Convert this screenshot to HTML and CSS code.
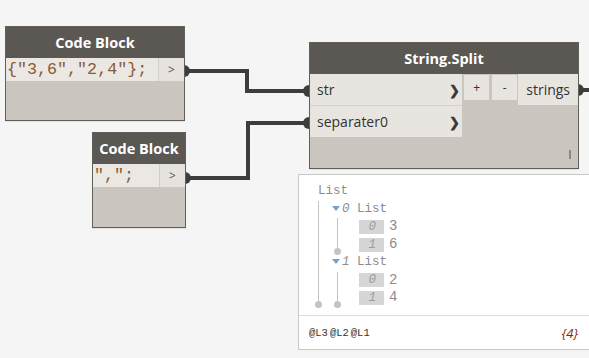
FILE: index.html
```html
<!DOCTYPE html>
<html lang="en">
<head>
    <meta charset="UTF-8">
    <title>String.Split graph</title>
    <link rel="stylesheet" href="styles.css">
</head>
<body>
    <div class="canvas">
        <svg class="wires" width="589" height="358" viewBox="0 0 589 358">
            <path class="wire" d="M188 71 H247 V91 H306"/>
            <path class="wire" d="M188 178 H248 V123 H306"/>
            <path class="wire" d="M582 90 H592"/>
            <path class="port" d="M184 65 A6 6 0 0 1 184 77 Z"/>
            <path class="port" d="M185 172 A6 6 0 0 1 185 184 Z"/>
            <path class="port" d="M309 85 A6 6 0 0 0 309 97 Z"/>
            <path class="port" d="M309 117 A6 6 0 0 0 309 129 Z"/>
            <path class="port" d="M578 84 A6 6 0 0 1 578 96 Z"/>
        </svg>

        <div class="node code-block first">
            <div class="node-title">Code Block</div>
            <div class="code-row">
                <span class="code">{"3,6","2,4"};</span>
                <span class="out-cell">&gt;</span>
            </div>
        </div>

        <div class="node code-block second">
            <div class="node-title">Code Block</div>
            <div class="code-row">
                <span class="code">",";</span>
                <span class="out-cell">&gt;</span>
            </div>
        </div>

        <div class="node split">
            <div class="node-title">String.Split</div>
            <div class="split-body">
                <div class="inputs">
                    <div class="input-row first-row">str<span class="chev">&#x276F;</span></div>
                    <div class="input-row">separater0<span class="chev">&#x276F;</span></div>
                </div>
                <div class="lacing">
                    <span class="lace-btn">+</span>
                    <span class="lace-btn">-</span>
                </div>
                <div class="output-cell">strings</div>
            </div>
            <span class="grip"></span>
        </div>

        <div class="watch">
            <div class="tree">
                <div class="item">
                    <div class="label">List</div>
                    <div class="children root-children">
                        <div class="item">
                            <div class="label"><span class="caret"></span><i>0</i> List</div>
                            <div class="children">
                                <div class="leaf"><span class="idx">0</span>3</div>
                                <div class="leaf"><span class="idx">1</span>6</div>
                            </div>
                        </div>
                        <div class="item">
                            <div class="label"><span class="caret"></span><i>1</i> List</div>
                            <div class="children">
                                <div class="leaf"><span class="idx">0</span>2</div>
                                <div class="leaf"><span class="idx">1</span>4</div>
                            </div>
                        </div>
                    </div>
                </div>
            </div>
            <div class="watch-footer">
                <div class="levels"><span>@L3</span><span>@L2</span><span>@L1</span></div>
                <span class="count">{4}</span>
            </div>
        </div>
    </div>
</body>
</html>
```

FILE: styles.css
```css
:root {
    --canvas: #f5f5f5;
    --title: #5b5854;
    --body: #cac6bf;
    --row: #e8e5e0;
    --wire: #3d3d3d;
}

* {
    box-sizing: border-box;
    margin: 0;
    padding: 0;
}

body {
    background: var(--canvas);
    font-family: 'Open Sans', sans-serif;
}

.canvas {
    position: relative;
    width: 589px;
    height: 358px;
    overflow: hidden;
}

.wires {
    position: absolute;
    left: 0;
    top: 0;
}

.wire {
    fill: none;
    stroke: var(--wire);
    stroke-width: 4;
    stroke-linejoin: miter;
}

.port {
    fill: var(--wire);
}

/* nodes sit on a free canvas */
.node {
    position: absolute;
    display: flex;
    flex-direction: column;
    background: var(--body);
    border: 1px solid #625f5b;
    box-shadow: 0 1px 0 #e2e2e2;
}

.node-title {
    height: 31px;
    background: var(--title);
    color: #fff;
    font-weight: 700;
    font-size: 14.5px;
    display: flex;
    align-items: center;
    justify-content: center;
}

.code-block.first {
    left: 5px;
    top: 26px;
    width: 180px;
    height: 95px;
}

.code-block.second {
    left: 92px;
    top: 132px;
    width: 94px;
    height: 96px;
}

.code-row {
    display: flex;
    height: 23px;
}

.code {
    flex: 1;
    background: #ebe8e3;
    color: #8a5b38;
    font-family: 'Liberation Mono', monospace;
    font-size: 16.7px;
    line-height: 23px;
    padding-left: 1px;
    white-space: pre;
}

.out-cell {
    width: 26px;
    background: #e6e3de;
    border-left: 1px solid #d2cec8;
    color: #555;
    font-size: 12px;
    display: flex;
    align-items: center;
    justify-content: center;
}

.split {
    left: 309px;
    top: 42px;
    width: 270px;
    height: 127px;
}

.split-body {
    display: flex;
    align-items: flex-start;
}

.inputs {
    width: 153px;
}

.input-row {
    height: 31px;
    background: var(--row);
    color: #333;
    font-size: 14px;
    display: flex;
    align-items: center;
    justify-content: space-between;
    padding: 0 2px 0 7px;
}

.input-row.first-row {
    height: 32px;
    border-bottom: 1px solid #d4d0ca;
}

.chev {
    font-size: 13px;
    font-weight: 700;
    color: #3a3a3a;
}

.lacing {
    display: flex;
    gap: 3px;
    margin-left: 2px;
    margin-top: 1px;
}

.lace-btn {
    width: 25px;
    height: 25px;
    background: var(--row);
    color: #333;
    font-size: 12px;
    display: flex;
    align-items: center;
    justify-content: center;
}

.output-cell {
    width: 60px;
    height: 31px;
    margin-left: 1px;
    background: var(--row);
    color: #333;
    font-size: 14px;
    display: flex;
    align-items: center;
    justify-content: center;
}

.grip {
    position: absolute;
    right: 7px;
    bottom: 9px;
    width: 2px;
    height: 9px;
    background: #8c8984;
}

/* watch preview */
.watch {
    position: absolute;
    left: 298px;
    top: 174px;
    width: 296px;
    height: 176px;
    background: #fff;
    border: 1px solid #c8c8c8;
    display: flex;
    flex-direction: column;
}

.tree {
    flex: 1;
    padding: 8px 0 0 19px;
    font-family: 'Liberation Mono', monospace;
    font-size: 12.5px;
    line-height: 17.7px;
    color: #8c8c8c;
}

.children {
    position: relative;
    border-left: 1px solid #c4c4c4;
    margin-left: 5px;
    padding-left: 21px;
}

.children.root-children {
    margin-left: 0;
    padding-left: 13px;
}

.children::after {
    content: '';
    position: absolute;
    left: -4px;
    bottom: -1px;
    width: 7px;
    height: 7px;
    border-radius: 50%;
    background: #c4c4c4;
}

.label i {
    font-style: italic;
}

.caret {
    display: inline-block;
    width: 0;
    height: 0;
    border-left: 4px solid transparent;
    border-right: 4px solid transparent;
    border-top: 5px solid #6fa3d6;
    margin-right: 2px;
    vertical-align: middle;
}

.leaf {
    display: flex;
    align-items: center;
    gap: 5px;
    font-size: 14px;
}

.idx {
    flex: 0 0 25px;
    height: 14px;
    background: #d6d6d6;
    font-size: 12.5px;
    font-style: italic;
    line-height: 14px;
    text-align: right;
    padding-right: 8px;
    color: #9c9c9c;
}

.watch-footer {
    height: 34px;
    border-top: 1px solid #dedede;
    display: flex;
    align-items: center;
    justify-content: space-between;
    padding: 0 15px 0 10px;
}

.levels {
    display: flex;
    gap: 2px;
    font-family: 'Liberation Mono', monospace;
    font-size: 10.5px;
    color: #333;
}

.count {
    font-size: 13px;
    font-style: italic;
    color: #8b1f1f;
}
```
